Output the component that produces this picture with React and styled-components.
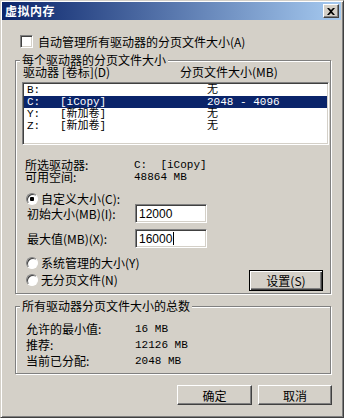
import styled, { createGlobalStyle } from "styled-components";

const GlobalStyle = createGlobalStyle`
  html, body {
    margin: 0;
    padding: 0;
    background: #d4d0c8;
  }
  body {
    font-family: "Noto Sans CJK SC", "Liberation Sans", sans-serif;
    font-size: 12px;
    color: #000;
  }
`;

const drives = [
  { drive: "B:", label: "", size: "无" },
  { drive: "C:", label: "[iCopy]", size: "2048 - 4096", selected: true },
  { drive: "Y:", label: "[新加卷]", size: "无" },
  { drive: "Z:", label: "[新加卷]", size: "无" },
];

const totals = [
  ["允许的最小值:", "16 MB"],
  ["推荐:", "12126 MB"],
  ["当前已分配:", "2048 MB"],
];

export default function App() {
  return (
    <>
      <GlobalStyle />
      <Window>
        <TitleBar>
          <Title>虚拟内存</Title>
          <CloseButton>
            <svg width="8" height="7" viewBox="0 0 8 7">
              <path d="M0 0h2l2 2 2-2h2L5 3.5 8 7H6L4 5 2 7H0l3-3.5z" fill="#000" />
            </svg>
          </CloseButton>
        </TitleBar>

        <Content>
          <AutoRow>
            <CheckBox />
            <span>自动管理所有驱动器的分页文件大小(A)</span>
          </AutoRow>

          <Group>
            <Caption>每个驱动器的分页文件大小</Caption>
            <ListHeader>
              <span>驱动器 [卷标](D)</span>
              <span>分页文件大小(MB)</span>
            </ListHeader>
            <ListBox>
              {drives.map((d) => (
                <DriveRow key={d.drive} $selected={d.selected}>
                  <span>{d.drive}</span>
                  <span>{d.label}</span>
                  <span>{d.size}</span>
                </DriveRow>
              ))}
            </ListBox>

            <InfoGrid>
              <span>所选驱动器:</span>
              <Value>C:&nbsp;&nbsp;[iCopy]</Value>
              <span>可用空间:</span>
              <Value>48864 MB</Value>
            </InfoGrid>

            <RadioRow style={{ marginTop: 10 }}>
              <Radio $checked />
              <span>自定义大小(C):</span>
            </RadioRow>

            <SizeGrid>
              <span>初始大小(MB)(I):</span>
              <Field>12000</Field>
              <span>最大值(MB)(X):</span>
              <Field>
                16000
                <Caret />
              </Field>
            </SizeGrid>

            <BottomRow>
              <RadioColumn>
                <RadioRow>
                  <Radio />
                  <span>系统管理的大小(Y)</span>
                </RadioRow>
                <RadioRow>
                  <Radio />
                  <span>无分页文件(N)</span>
                </RadioRow>
              </RadioColumn>
              <SetButton $default>设置(S)</SetButton>
            </BottomRow>
          </Group>

          <Group $second>
            <Caption>所有驱动器分页文件大小的总数</Caption>
            <TotalsGrid>
              {totals.map(([k, v]) => (
                <TotalItem key={k}>
                  <span>{k}</span>
                  <Value>{v}</Value>
                </TotalItem>
              ))}
            </TotalsGrid>
          </Group>

          <Footer>
            <Button $w={75}>确定</Button>
            <Button $w={74}>取消</Button>
          </Footer>
        </Content>
      </Window>
    </>
  );
}

const Window = styled.div`
  box-sizing: border-box;
  width: 344px;
  height: 418px;
  padding: 1px 2px 1px 1px;
  border: 1px solid;
  border-color: #d4d0c8 #404040 #404040 #d4d0c8;
  box-shadow: inset 1px 1px 0 #fff, inset -1px -1px 0 #808080;
  background: #d4d0c8;
  display: flex;
  flex-direction: column;
`;

const TitleBar = styled.div`
  height: 18px;
  display: flex;
  align-items: center;
  padding: 0 2px 0 3px;
  background: linear-gradient(to right, #0a246a, #a6caf0);
`;

const Title = styled.span`
  color: #fff;
  font-weight: bold;
  font-size: 12px;
  letter-spacing: 0.5px;
  line-height: 18px;
`;

const CloseButton = styled.div`
  box-sizing: border-box;
  margin-left: auto;
  width: 16px;
  height: 14px;
  display: flex;
  align-items: center;
  justify-content: center;
  background: #d4d0c8;
  border: 1px solid;
  border-color: #fff #404040 #404040 #fff;
  box-shadow: inset -1px -1px 0 #808080;
`;

const Content = styled.div`
  display: flex;
  flex-direction: column;
  padding: 0 9px 0 13px;
`;

const AutoRow = styled.div`
  margin-top: 15px;
  height: 13px;
  display: flex;
  align-items: center;
  gap: 5px;
  padding-left: 5px;
  line-height: 13px;
`;

const CheckBox = styled.div`
  box-sizing: border-box;
  width: 13px;
  height: 13px;
  background: #fff;
  border: 1px solid;
  border-color: #808080 #fff #fff #808080;
  box-shadow: inset 1px 1px 0 #404040, inset -1px -1px 0 #d4d0c8;
`;

const Group = styled.fieldset`
  margin: 6px 1px 0 0;
  padding: 0 0 ${(p) => (p.$second ? "4px" : "2px")} 0;
  min-width: 0;
  border: 1px solid #808080;
  box-shadow: inset 1px 1px 0 #fff, 1px 1px 0 #fff;
  display: flex;
  flex-direction: column;
`;

const Caption = styled.legend`
  margin-left: 4px;
  padding: 0 2px;
  line-height: 12px;
  font-size: 12px;
  background: #d4d0c8;
`;

const ListHeader = styled.div`
  display: grid;
  grid-template-columns: 157px 1fr;
  padding-left: 7px;
  line-height: 12px;
`;

const ListBox = styled.div`
  box-sizing: border-box;
  margin: 4px 1px 0 6px;
  height: 63px;
  padding: 1px;
  background: #fff;
  border: 1px solid;
  border-color: #808080 #fff #fff #808080;
  box-shadow: inset 1px 1px 0 #404040, inset -1px -1px 0 #d4d0c8;
`;

const DriveRow = styled.div`
  display: grid;
  grid-template-columns: 33px 147px 1fr;
  padding-left: 3px;
  height: 12px;
  line-height: 12px;
  font-family: "Liberation Mono", "Noto Sans CJK SC", monospace;
  font-size: 11px;
  white-space: nowrap;
  background: ${(p) => (p.$selected ? "#0a246a" : "transparent")};
  color: ${(p) => (p.$selected ? "#fff" : "#000")};
`;

const Value = styled.span`
  font-family: "Liberation Mono", "Noto Sans CJK SC", monospace;
  font-size: 11px;
`;

const InfoGrid = styled.div`
  margin-top: 14px;
  display: grid;
  grid-template-columns: 109px 1fr;
  padding-left: 9px;
  line-height: 12px;
`;

const RadioRow = styled.div`
  height: 12px;
  display: flex;
  align-items: center;
  gap: 3px;
  padding-left: 10px;
  line-height: 12px;
  white-space: nowrap;
`;

const Radio = styled.div`
  box-sizing: border-box;
  width: 12px;
  height: 12px;
  border-radius: 50%;
  border: 1px solid;
  border-color: #808080 #fff #fff #808080;
  box-shadow: inset 1px 1px 0 #404040;
  background: ${(p) =>
    p.$checked
      ? "radial-gradient(circle, #000 0 2px, #fff 2.5px)"
      : "#fff"};
`;

const SizeGrid = styled.div`
  margin-top: -1px;
  display: grid;
  grid-template-columns: 108px 72px;
  row-gap: 6px;
  align-items: center;
  padding-left: 11px;
  line-height: 12px;
`;

const Field = styled.div`
  box-sizing: border-box;
  height: 19px;
  padding: 0 3px;
  display: flex;
  align-items: center;
  background: #fff;
  font-family: "Liberation Sans", Arial, sans-serif;
  font-size: 12px;
  border: 1px solid;
  border-color: #808080 #fff #fff #808080;
  box-shadow: inset 1px 1px 0 #404040, inset -1px -1px 0 #d4d0c8;
`;

const Caret = styled.span`
  display: inline-block;
  width: 1px;
  height: 13px;
  margin-left: 1px;
  background: #000;
`;

const BottomRow = styled.div`
  margin-top: 9px;
  display: flex;
  align-items: flex-start;
  justify-content: space-between;
`;

const RadioColumn = styled.div`
  display: flex;
  flex-direction: column;
  gap: 5px;
`;

const Button = styled.button`
  box-sizing: border-box;
  width: ${(p) => p.$w || 75}px;
  height: ${(p) => p.$h || 20}px;
  padding: 0;
  font-family: "Noto Sans CJK SC", "Liberation Sans", sans-serif;
  font-size: 12px;
  color: #000;
  background: #d4d0c8;
  ${(p) =>
    p.$default
      ? `
    border: 1px solid #000;
    box-shadow: inset 1px 1px 0 #fff, inset -1px -1px 0 #404040, inset -2px -2px 0 #808080;
  `
      : `
    border: 1px solid;
    border-color: #fff #404040 #404040 #fff;
    box-shadow: inset -1px -1px 0 #808080, inset 1px 1px 0 #d4d0c8;
  `}
`;

const SetButton = styled(Button).attrs({ $w: 74, $h: 21 })`
  margin-top: 13px;
  margin-right: 7px;
`;

const TotalsGrid = styled.div`
  padding-top: 9px;
  display: flex;
  flex-direction: column;
`;

const TotalItem = styled.div`
  display: grid;
  grid-template-columns: 109px 1fr;
  padding-left: 10px;
  height: 16px;
  line-height: 16px;
`;

const Footer = styled.div`
  margin-top: 11px;
  display: flex;
  justify-content: flex-end;
  gap: 6px;
`;
